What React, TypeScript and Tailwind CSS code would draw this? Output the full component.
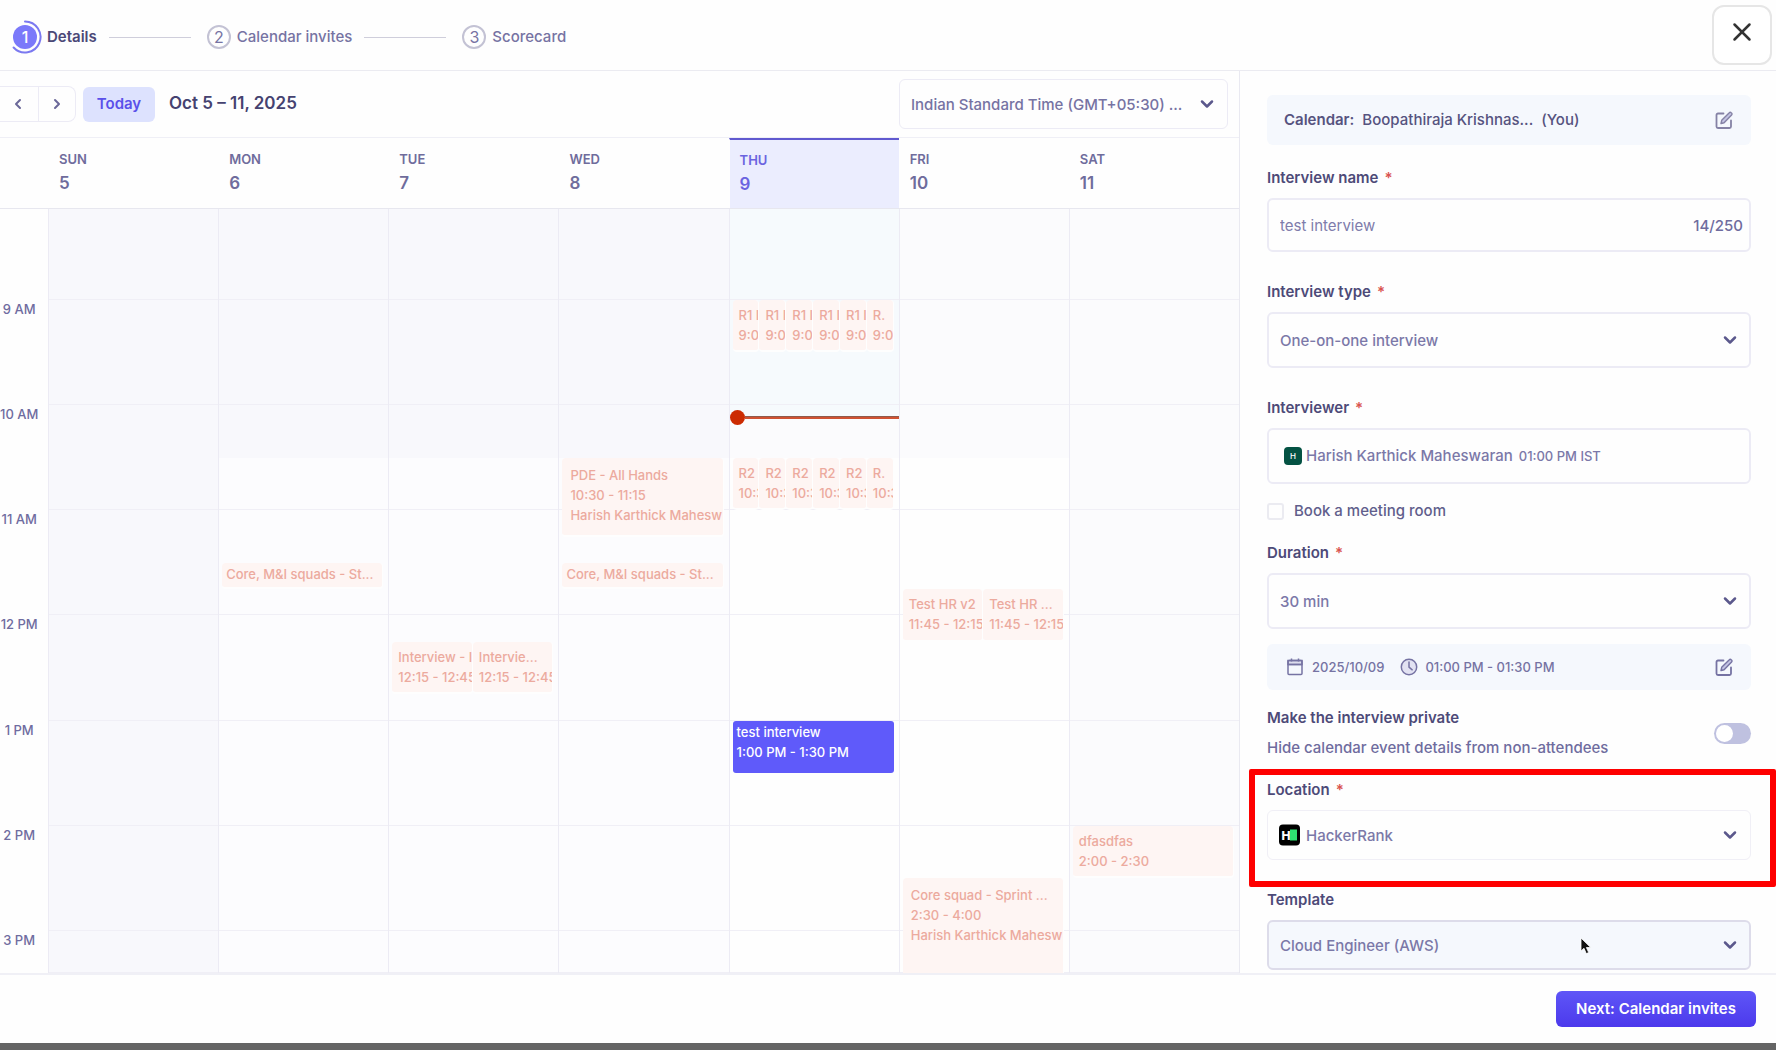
import { useState } from 'react'
import type { ReactNode } from 'react'
import { ChevronDown, ChevronLeft, ChevronRight, X } from 'lucide-react'
import clsx from 'clsx'

// ---------------------------------------------------------------------------
// Calendar data. Times are decimal hours; the grid shows a scrolled window
// of the day that starts a little after 8 AM.
// ---------------------------------------------------------------------------

const VIEW_START = 8.136
const VIEW_SPAN = 7.263

interface CalendarEvent {
  lines: string[]
  start: number
  end: number
  lane?: number
  lanes?: number
  kind?: 'short' | 'tall' | 'selected'
}

interface Day {
  name: string
  date: number
  today?: boolean
  background: string
  shade?: string
  events: CalendarEvent[]
}

const roundEvents = (title: string, time: string, start: number): CalendarEvent[] =>
  [0, 1, 2, 3, 4, 5].map((lane) => ({
    lines: [lane === 5 ? 'R.' : title, time],
    start,
    end: start + 0.5,
    lane,
    lanes: 6,
  }))

const DAYS: Day[] = [
  { name: 'SUN', date: 5, background: 'bg-[#f8f8fc]', events: [] },
  {
    name: 'MON',
    date: 6,
    background: 'bg-[#fcfcfe]',
    shade: 'bg-[#f8f8fc]',
    events: [{ lines: ['Core, M&I squads - St...'], start: 11.5, end: 11.75, kind: 'short' }],
  },
  {
    name: 'TUE',
    date: 7,
    background: 'bg-[#fcfcfe]',
    shade: 'bg-[#f8f8fc]',
    events: [
      { lines: ['Interview - I', '12:15 - 12:45'], start: 12.25, end: 12.75, lane: 0, lanes: 2 },
      { lines: ['Intervie...', '12:15 - 12:45'], start: 12.25, end: 12.75, lane: 1, lanes: 2 },
    ],
  },
  {
    name: 'WED',
    date: 8,
    background: 'bg-[#fcfcfe]',
    shade: 'bg-[#f8f8fc]',
    events: [
      {
        lines: ['PDE - All Hands', '10:30 - 11:15', 'Harish Karthick Mahesw'],
        start: 10.5,
        end: 11.25,
        kind: 'tall',
      },
      { lines: ['Core, M&I squads - St...'], start: 11.5, end: 11.75, kind: 'short' },
    ],
  },
  {
    name: 'THU',
    date: 9,
    today: true,
    background: 'bg-[#fefefe]',
    shade: 'bg-[#fbfbfd]',
    events: [
      ...roundEvents('R1 I', '9:00', 9),
      ...roundEvents('R2', '10:3', 10.5),
      { lines: ['test interview', '1:00 PM - 1:30 PM'], start: 13, end: 13.5, kind: 'selected' },
    ],
  },
  {
    name: 'FRI',
    date: 10,
    background: 'bg-[#fefefe]',
    shade: 'bg-[#fbfbfd]',
    events: [
      { lines: ['Test HR v2', '11:45 - 12:15'], start: 11.75, end: 12.25, lane: 0, lanes: 2 },
      { lines: ['Test HR ...', '11:45 - 12:15'], start: 11.75, end: 12.25, lane: 1, lanes: 2 },
      {
        lines: ['Core squad - Sprint ...', '2:30 - 4:00', 'Harish Karthick Mahesw'],
        start: 14.5,
        end: 16,
        kind: 'tall',
      },
    ],
  },
  {
    name: 'SAT',
    date: 11,
    background: 'bg-[#fbfbfd]',
    events: [{ lines: ['dfasdfas', '2:00 - 2:30'], start: 14, end: 14.5 }],
  },
]

const HOURS = ['', '9 AM', '10 AM', '11 AM', '12 PM', '1 PM', '2 PM', '3 PM']

const NOW = 10.115

const toPercent = (hours: number) => `${(hours / VIEW_SPAN) * 100}%`

// ---------------------------------------------------------------------------
// Icons
// ---------------------------------------------------------------------------

function EditIcon() {
  return (
    <svg viewBox="0 0 18 18" className="size-[18px]" fill="none" stroke="currentColor" strokeLinejoin="round">
      <path d="M8.500 2.500H3A1.500 1.500 0 0 0 1.500 4v11.500A1.500 1.500 0 0 0 3 17h11.500a1.500 1.500 0 0 0 1.500-1.500V9.500" strokeWidth="1.800" strokeLinecap="round" />
      <path d="M6 12.500l.7-3.200 7.600-7.600a1.300 1.300 0 0 1 1.900 0l.4.4a1.300 1.300 0 0 1 0 1.900L9.100 11.700z" strokeWidth="1.400" fill="#c3c3e3" />
    </svg>
  )
}

function CalendarIcon() {
  return (
    <svg viewBox="0 0 16 18" className="h-[18px] w-4" fill="none" stroke="currentColor" strokeWidth="1.5">
      <path d="M1 2.500h14V6.500H1z" fill="#dddded" />
      <rect x="1" y="2.500" width="14" height="14" rx="1" />
      <path d="M1 6.500h14M4.500 .5v3M11.500 .5v3" />
    </svg>
  )
}

function ClockIcon() {
  return (
    <svg viewBox="0 0 18 18" className="ml-4 size-[18px]" fill="none" stroke="currentColor" strokeWidth="1.500">
      <circle cx="9" cy="9" r="7.700" fill="#e2e2f2" />
      <path d="M9 4v5.200l3.200 2.600" strokeLinecap="round" strokeLinejoin="round" />
    </svg>
  )
}

function HackerRankLogo() {
  return (
    <span className="pointer-events-none absolute left-3 top-1/2 flex size-[21px] -translate-y-1/2 items-center justify-center rounded bg-black">
      <span className="text-xs font-extrabold leading-none text-white">H</span>
      <span className="h-[11px] w-[7px] bg-[#2ee070]" />
    </span>
  )
}

// ---------------------------------------------------------------------------
// Header
// ---------------------------------------------------------------------------

function StepLine() {
  return <div className="ml-3 mr-4 h-px w-[82px] bg-[#cfcedb]" />
}

function Step({ number, label }: { number: number; label: string }) {
  return (
    <div className="flex items-center gap-1.5 text-[#7673a3]">
      <span className="flex size-6 items-center justify-center rounded-full border-2 border-[#c3c2d4] text-base">
        {number}
      </span>
      <span className="text-[15px] font-medium">{label}</span>
    </div>
  )
}

function Header() {
  return (
    <header className="flex h-[71px] shrink-0 items-center justify-between border-b border-[#ebebf1] pl-2 pr-1">
      <div className="flex items-center pt-1">
        <div className="flex items-center gap-[5px]">
          <span className="relative flex size-[34px] items-center justify-center">
            <svg viewBox="0 0 34 34" className="absolute inset-0 size-full" fill="none">
              <circle cx="17" cy="17" r="12" fill="#7b79fa" />
              <path d="M17 1.500A15.500 15.500 0 1 1 5.600 27.500" stroke="#7b79f0" strokeWidth="2" strokeLinecap="round" />
            </svg>
            <span className="relative text-base font-medium text-white">1</span>
          </span>
          <span className="text-[15px] font-semibold text-[#4b4877]">Details</span>
        </div>
        <StepLine />
        <Step number={2} label="Calendar invites" />
        <StepLine />
        <Step number={3} label="Scorecard" />
      </div>
      <button
        type="button"
        aria-label="Close"
        className="flex size-[60px] items-center justify-center rounded-xl border-2 border-[#e6e6e6] bg-white pb-1.5 text-[#333]"
      >
        <X className="size-[30px]" strokeWidth={2} />
      </button>
    </header>
  )
}

// ---------------------------------------------------------------------------
// Calendar
// ---------------------------------------------------------------------------

function Toolbar() {
  return (
    <div className="flex h-[67px] shrink-0 items-center border-b border-[#efeff6] pr-[11px] text-[#6b6899]">
      <div className="flex h-9 w-[76px] rounded-r-lg border border-l-0 border-[#ecebf5]">
        <button
          type="button"
          aria-label="Previous week"
          className="flex flex-1 items-center justify-center border-r border-[#ecebf5] pr-0.5"
        >
          <ChevronLeft className="size-4" strokeWidth={3} />
        </button>
        <button type="button" aria-label="Next week" className="flex flex-1 items-center justify-center">
          <ChevronRight className="size-4" strokeWidth={3} />
        </button>
      </div>
      <button
        type="button"
        className="ml-[7px] h-[35px] w-[72px] rounded-md bg-[#dde2fe] text-[15px] font-semibold text-[#5a50ea]"
      >
        Today
      </button>
      <h1 className="ml-3.5 flex-1 text-[17px] font-semibold text-[#454270]">Oct 5 – 11, 2025</h1>
      <div className="relative w-[329px]">
        <select
          aria-label="Time zone"
          className="h-[50px] w-full appearance-none rounded-md border border-[#ecebf5] bg-transparent pl-[11px] pt-0.5 text-[15px] font-medium text-[#7673a3]"
        >
          <option>Indian Standard Time (GMT+05:30) ...</option>
        </select>
        <ChevronDown
          className="pointer-events-none absolute right-[11px] top-1/2 size-5 -translate-y-1/2 text-[#5b588c]"
          strokeWidth={3}
        />
      </div>
    </div>
  )
}

function EventCard({ event }: { event: CalendarEvent }) {
  const { lines, start, end, lane = 0, lanes = 1, kind } = event
  return (
    <div
      className={clsx(
        'absolute overflow-hidden whitespace-nowrap text-[13px] font-medium leading-5',
        kind === 'selected' && 'rounded-[3px] bg-[#5f5afa] px-1 pt-px text-white',
        kind !== 'selected' && 'rounded-sm border-b-2 border-r border-[#fefefe] bg-[#fef5f3] text-[#ecaa9e]',
        kind === 'short' && 'pl-1 pt-px',
        kind === 'tall' && 'pl-2 pt-[7px]',
        !kind && 'pl-1.5 pt-[5px]',
      )}
      style={{
        top: toPercent(start - VIEW_START),
        height: toPercent(end - start),
        left: `${(lane / lanes) * 100}%`,
        width: `${100 / lanes}%`,
      }}
    >
      {lines.map((line) => (
        <div key={line}>{line}</div>
      ))}
    </div>
  )
}

function DayColumn({ day }: { day: Day }) {
  return (
    <div className={clsx('relative overflow-hidden border-l border-[#ecebf4]', day.background)}>
      {day.shade && (
        <div className={clsx('absolute inset-x-0 top-0', day.shade)} style={{ height: toPercent(10.5 - VIEW_START) }} />
      )}
      {day.today && (
        <div className="absolute inset-x-0 top-0 bg-[#f6fafd]" style={{ height: toPercent(NOW - VIEW_START) }} />
      )}
      <div className="absolute inset-0 grid grid-rows-[273fr_repeat(6,316fr)_126fr]">
        {HOURS.map((hour) => (
          <div key={hour} className="border-b border-[#f0eff6]" />
        ))}
      </div>
      <div className="absolute inset-y-0 left-[3px] right-[5px]">
        {day.events.map((event) => (
          <EventCard key={`${event.start}-${event.lane ?? 0}`} event={event} />
        ))}
      </div>
      {day.today && (
        <div
          className="absolute inset-x-0 flex h-4 -translate-y-1/2 items-center"
          style={{ top: toPercent(NOW - VIEW_START) }}
        >
          <span className="size-[15px] rounded-full bg-[#cc2b02]" />
          <span className="h-[3px] flex-1 border-t border-[#8f5a4c] bg-[#cf5232]" />
        </div>
      )}
    </div>
  )
}

function WeekCalendar() {
  return (
    <section className="flex min-w-0 flex-1 flex-col">
      <Toolbar />
      <div className="flex h-[71px] shrink-0 border-b border-[#e7e7ef] pl-12">
        <div className="grid flex-1 grid-cols-7">
          {DAYS.map((day) => (
            <div
              key={day.name}
              className={clsx(
                'border-l pl-2.5',
                day.today
                  ? 'border-l-transparent border-t-2 border-t-[#6059cf] bg-[#ebedfe] bg-clip-padding pt-2 text-[#6a63e0]'
                  : 'border-transparent pt-[9px] text-[#6f6c9c]',
              )}
            >
              <div className="text-[13px] font-semibold leading-6">{day.name}</div>
              <div className="text-[17px] font-semibold leading-6">{day.date}</div>
            </div>
          ))}
        </div>
      </div>
      <div className="flex min-h-0 flex-1">
        <div className="grid w-12 shrink-0 grid-rows-[273fr_repeat(6,316fr)_126fr]">
          {HOURS.map((hour) => (
            <div
              key={hour}
              className="flex justify-center whitespace-nowrap pr-4 text-[13px] font-medium leading-[18px] text-[#6f6ca0]"
            >
              {hour}
            </div>
          ))}
        </div>
        <div className="grid flex-1 grid-cols-7">
          {DAYS.map((day) => (
            <DayColumn key={day.name} day={day} />
          ))}
        </div>
      </div>
    </section>
  )
}

// ---------------------------------------------------------------------------
// Form
// ---------------------------------------------------------------------------

function FieldLabel({ htmlFor, required, children }: { htmlFor: string; required?: boolean; children: ReactNode }) {
  return (
    <label htmlFor={htmlFor} className="mb-2 block text-[15px] font-semibold leading-6 text-[#4d4a78]">
      {children}
      {required && <span className="ml-1.5 text-[#d9534f]">*</span>}
    </label>
  )
}

interface SelectFieldProps {
  id: string
  value: string
  className: string
  icon?: ReactNode
}

function SelectField({ id, value, className, icon }: SelectFieldProps) {
  return (
    <div className="relative">
      {icon}
      <select
        id={id}
        className={clsx(
          'w-full appearance-none rounded-md border pt-0.5 text-[15px] font-medium text-[#7b78a8]',
          className,
        )}
      >
        <option>{value}</option>
      </select>
      <ChevronDown
        className="pointer-events-none absolute right-[11px] top-1/2 size-5 -translate-y-1/2 text-[#5b588c]"
        strokeWidth={3}
      />
    </div>
  )
}

function InterviewForm() {
  const [name, setName] = useState('test interview')

  return (
    <aside className="w-[537px] shrink-0 overflow-hidden border-l border-[#e9e9f1] pl-[27px] pr-[25px] pt-6 text-[15px] leading-6 text-[#6f6c9e]">
      <div className="flex h-[50px] items-center rounded-md bg-[#f5f8fd] pl-[17px] pr-[18px] font-medium text-[#56537f]">
        <span className="font-semibold">Calendar:</span>
        <span className="ml-2">Boopathiraja Krishnas...</span>
        <span className="ml-2">(You)</span>
        <button type="button" aria-label="Edit calendar" className="ml-auto text-[#8582a5]">
          <EditIcon />
        </button>
      </div>

      <div className="mt-[21px]">
        <FieldLabel htmlFor="name" required>
          Interview name
        </FieldLabel>
        <div className="flex h-[54px] items-center rounded-md border-2 border-[#ecebf5] pl-[11px] pr-1.5 pt-0.5">
          <input
            id="name"
            value={name}
            onChange={(e) => setName(e.target.value)}
            className="min-w-0 flex-1 bg-transparent text-[#7f7cab] outline-none"
          />
          <span className="font-medium">{name.length}/250</span>
        </div>
      </div>

      <div className="mt-7">
        <FieldLabel htmlFor="type" required>
          Interview type
        </FieldLabel>
        <SelectField
          id="type"
          value="One-on-one interview"
          className="h-14 border-2 border-[#ecebf5] bg-transparent pl-[11px]"
        />
      </div>

      <div className="mt-7">
        <FieldLabel htmlFor="interviewer" required>
          Interviewer
        </FieldLabel>
        <button
          type="button"
          id="interviewer"
          className="flex h-14 w-full items-center rounded-md border-2 border-[#ecebf5] pl-[15px] text-left font-medium text-[#7b78a8]"
        >
          <span className="flex size-[18px] items-center justify-center rounded-sm bg-[#045243] text-[8px] text-white">
            H
          </span>
          <span className="ml-1">Harish Karthick Maheswaran</span>
          <span className="ml-1.5 text-[13px]">01:00 PM IST</span>
        </button>
      </div>

      <label className="mt-[15px] flex items-center gap-2.5 font-medium text-[#615e8c]">
        <input type="checkbox" className="size-[17px] appearance-none rounded-[3px] border-2 border-[#ebebf1]" />
        Book a meeting room
      </label>

      <div className="mt-[18px]">
        <FieldLabel htmlFor="duration" required>
          Duration
        </FieldLabel>
        <SelectField
          id="duration"
          value="30 min"
          className="h-14 border-2 border-[#ecebf5] bg-transparent pl-[11px]"
        />
      </div>

      <div className="mt-[15px] flex h-[46px] items-center rounded-md bg-[#f5f8fd] pl-5 pr-[18px] text-[13px] font-medium text-[#7673a3]">
        <CalendarIcon />
        <span className="ml-[9px]">2025/10/09</span>
        <ClockIcon />
        <span className="ml-[7px]">01:00 PM - 01:30 PM</span>
        <button type="button" aria-label="Edit date and time" className="ml-auto">
          <EditIcon />
        </button>
      </div>

      <div className="mt-4 flex items-center justify-between">
        <div>
          <label htmlFor="private" className="block font-semibold text-[#4d4a78]">
            Make the interview private
          </label>
          <p className="mt-1.5 font-medium">Hide calendar event details from non-attendees</p>
        </div>
        <input
          id="private"
          type="checkbox"
          role="switch"
          className="flex h-[21px] w-[37px] appearance-none items-center rounded-full bg-[#bfc1e0] px-0.5 before:size-[17px] before:rounded-full before:bg-white checked:justify-end"
        />
      </div>

      <div className="relative mt-[18px]">
        <FieldLabel htmlFor="location" required>
          Location
        </FieldLabel>
        <SelectField
          id="location"
          value="HackerRank"
          className="h-[50px] border-[#f0eff6] bg-transparent pl-[38px]"
          icon={<HackerRankLogo />}
        />
        <div className="pointer-events-none absolute -bottom-[27px] -left-[18px] -right-[25px] -top-[9px] rounded-xs border-6 border-[#fe0000]" />
      </div>

      <div className="mt-7">
        <FieldLabel htmlFor="template">Template</FieldLabel>
        <div className="relative">
          <SelectField
            id="template"
            value="Cloud Engineer (AWS)"
            className="h-[50px] border-2 border-[#dddcea] bg-[#f5f8fd] pl-[11px]"
          />
          <svg viewBox="0 0 12 18" className="pointer-events-none absolute left-[313px] top-[17px] h-[18px] w-3">
            <path
              d="M1 1v13l3-2.700 2.300 5.300 2.400-1L6.400 10.500h4.300z"
              fill="#111"
              stroke="#fff"
              strokeWidth="0.8"
            />
          </svg>
        </div>
      </div>
    </aside>
  )
}

// ---------------------------------------------------------------------------
// Page
// ---------------------------------------------------------------------------

export default function App() {
  return (
    <div className="flex h-screen flex-col bg-[#fefefe] font-['Inter',sans-serif]">
      <Header />
      <main className="flex min-h-0 flex-1">
        <WeekCalendar />
        <InterviewForm />
      </main>
      <footer className="flex h-[77px] shrink-0 items-center justify-end border-b-[7px] border-t-2 border-b-[#646464] border-t-[#f0f0f6] pr-5">
        <button
          type="button"
          className="h-9 w-[200px] rounded-md bg-linear-to-b from-[#5f55f7] to-[#4c39ec] text-[15px] font-semibold text-white"
        >
          Next: Calendar invites
        </button>
      </footer>
    </div>
  )
}
